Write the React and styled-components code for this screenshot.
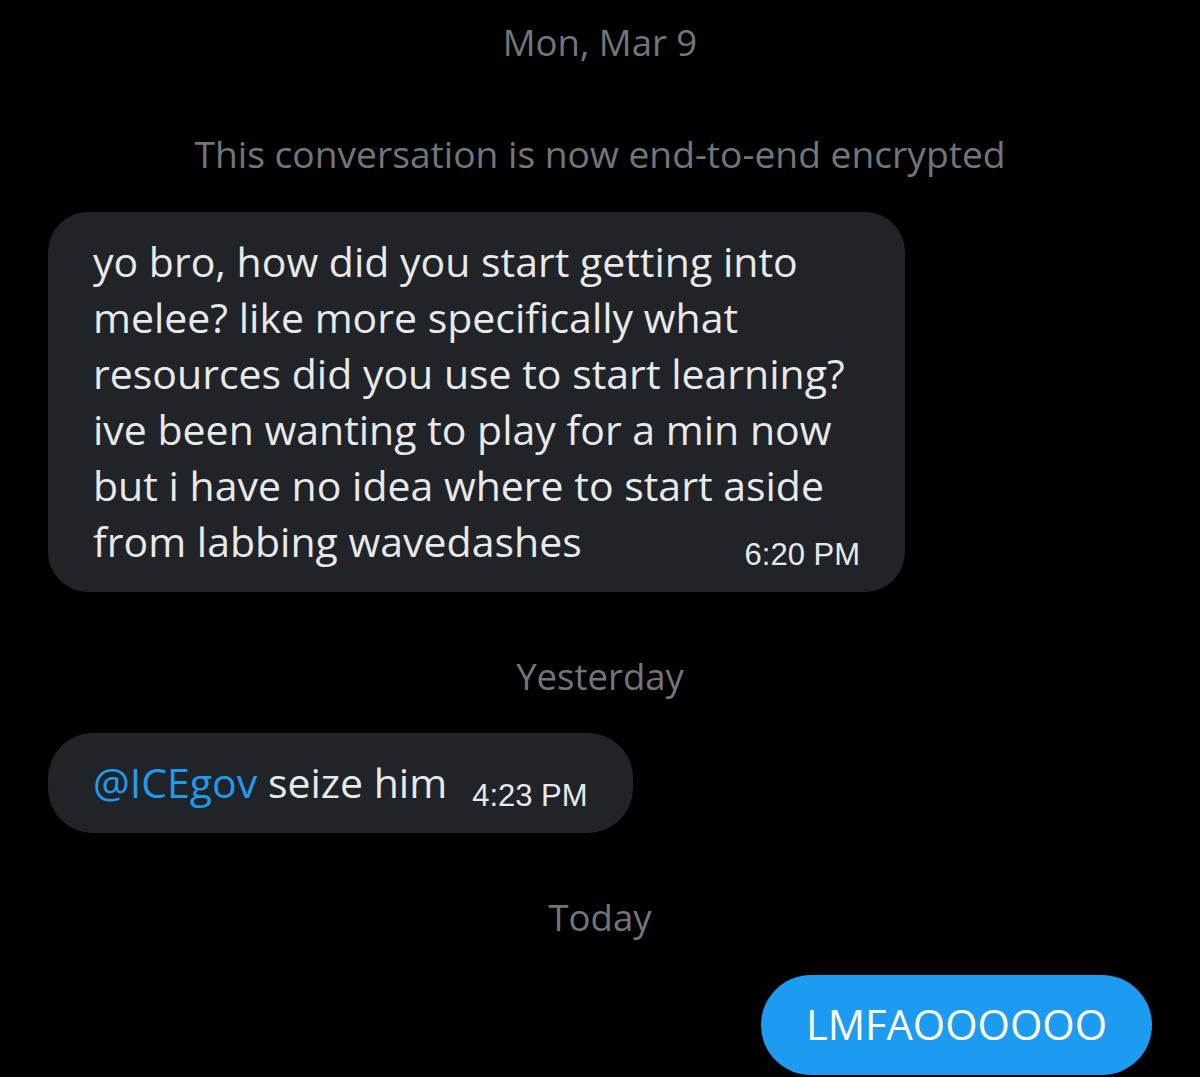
import React from 'react';
import styled, { createGlobalStyle } from 'styled-components';

const GlobalStyle = createGlobalStyle`
  html, body {
    margin: 0;
    padding: 0;
    background: #000;
  }
  body {
    font-family: "Open Sans", "Noto Sans", sans-serif;
    -webkit-font-smoothing: antialiased;
  }
`;

const Thread = styled.div`
  width: 1200px;
  height: 1077px;
  overflow: hidden;
  background: #000;
  display: flex;
  flex-direction: column;
  padding: 0 48px;
  box-sizing: border-box;
`;

const DateLabel = styled.div`
  text-align: center;
  color: #71767b;
  font-size: ${(p) => p.$size || 36.5}px;
  font-weight: 500;
  line-height: 40px;
  margin-top: ${(p) => p.$top}px;
  margin-bottom: ${(p) => p.$bottom}px;
`;

const Bubble = styled.div`
  align-self: ${(p) => (p.$mine ? 'flex-end' : 'flex-start')};
  width: ${(p) => (p.$width ? `${p.$width}px` : 'auto')};
  box-sizing: border-box;
  background: ${(p) => (p.$mine ? '#1d9bf0' : '#202327')};
  color: ${(p) => (p.$mine ? '#fff' : '#e7e9ea')};
  border-radius: ${(p) => p.$radius || 40}px;
  padding: 21px 45px 23px;
  font-size: ${(p) => (p.$mine ? 41.6 : 41)}px;
  line-height: 56px;
`;

const Line = styled.div`
  white-space: nowrap;
`;

const LastLine = styled.div`
  display: flex;
  align-items: baseline;
  justify-content: space-between;
  gap: 25px;
  white-space: nowrap;
`;

const Time = styled.span`
  font-family: "Liberation Sans", Arial, sans-serif;
  font-size: 31px;
  line-height: 1;
  color: #e7e9ea;
  position: relative;
  top: 8px;
`;

const Mention = styled.span`
  color: #1d9bf0;
`;

const lines = [
  'yo bro, how did you start getting into',
  'melee? like more specifically what',
  'resources did you use to start learning?',
  'ive been wanting to play for a min now',
  'but i have no idea where to start aside',
];

export default function App() {
  return (
    <>
      <GlobalStyle />
      <Thread>
        <DateLabel $top={22} $bottom={72}>Mon, Mar 9</DateLabel>
        <DateLabel $top={0} $bottom={38} $size={37.2}>
          This conversation is now end-to-end encrypted
        </DateLabel>

        <Bubble $width={857}>
          {lines.map((l) => (
            <Line key={l}>{l}</Line>
          ))}
          <LastLine>
            <span>from labbing wavedashes</span>
            <Time>6:20 PM</Time>
          </LastLine>
        </Bubble>

        <DateLabel $top={64} $bottom={37}>Yesterday</DateLabel>

        <Bubble $radius={45}>
          <LastLine>
            <span>
              <Mention>@ICEgov</Mention> seize him
            </span>
            <Time>4:23 PM</Time>
          </LastLine>
        </Bubble>

        <DateLabel $top={64} $bottom={38}>Today</DateLabel>

        <Bubble $mine $radius={50}>
          LMFAOOOOOO
        </Bubble>
      </Thread>
    </>
  );
}
